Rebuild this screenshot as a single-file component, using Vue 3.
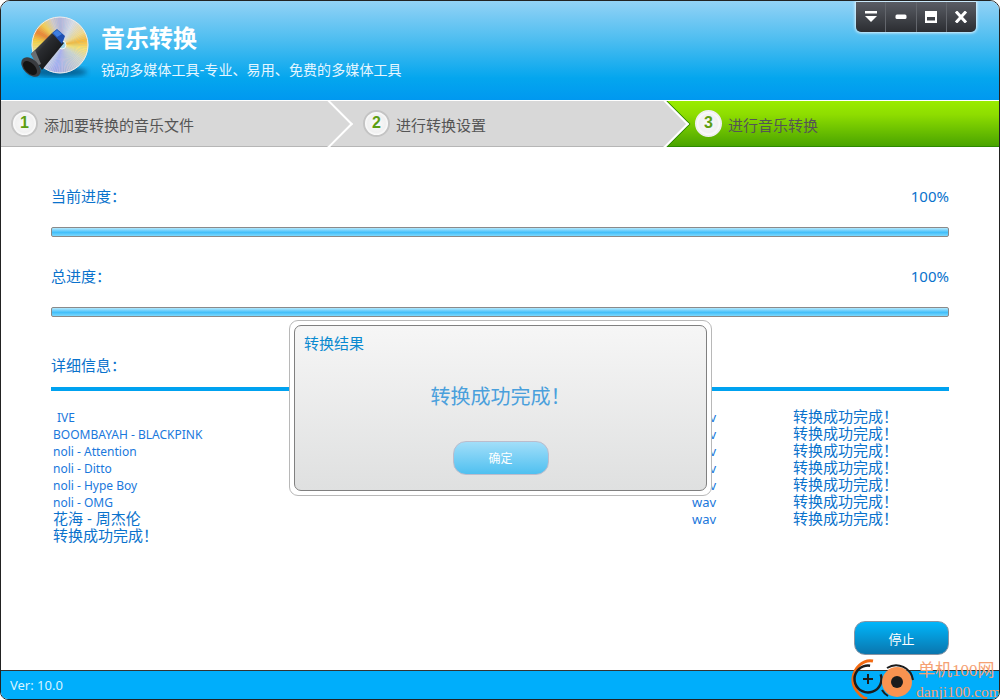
<template>
  <div class="window">
    <!-- 标题栏 -->
    <header class="head">
      <svg class="logo" width="70" height="68" viewBox="0 0 70 68">
        <defs>
          <filter id="soft"><feGaussianBlur stdDeviation="2.5" /></filter>
          <linearGradient id="tube" x1="0" y1="0" x2="1" y2="1">
            <stop offset="0" stop-color="#83878c" />
            <stop offset="0.38" stop-color="#2a2c30" />
            <stop offset="1" stop-color="#050505" />
          </linearGradient>
        </defs>
        <ellipse cx="36" cy="56" rx="30" ry="5" fill="#00365c" opacity="0.6" filter="url(#soft)" />
        <g>
          <polygon v-for="w in wedges" :key="w.points" :points="w.points" :fill="w.fill" :stroke="w.fill" stroke-width="0.4" />
        </g>
        <circle cx="39" cy="29" r="28" fill="none" stroke="#ececec" stroke-width="1" />
        <circle cx="41" cy="29" r="4" fill="#9fd4ea" stroke="#f4f4f4" stroke-width="1" />
        <polygon points="10,38 31,17 43,27 21,54" fill="url(#tube)" />
        <polygon points="31,17 36,13 44,20 41,28" fill="#1f4fb0" />
        <polygon points="32,17 36,14 41,18 36,21" fill="#3f7fe0" />
        <polygon points="10,38 14,34 20,48 16,50" fill="#6a6e72" />
        <ellipse cx="10" cy="51" rx="7.5" ry="11.5" transform="rotate(-45 10 51)" fill="#3a3c40" />
        <ellipse cx="9" cy="52" rx="5" ry="8.5" transform="rotate(-45 9 52)" fill="#141414" />
      </svg>
      <div class="brand">
        <h1>音乐转换</h1>
        <p>锐动多媒体工具-专业、易用、免费的多媒体工具</p>
      </div>
      <div class="win-btns">
        <button class="win-btn">
          <svg width="14" height="12" viewBox="0 0 14 12"><rect x="1" y="0" width="12" height="2.5" fill="#fff" /><polygon points="1,5 13,5 7,11" fill="#fff" /></svg>
        </button>
        <button class="win-btn">
          <svg width="14" height="12" viewBox="0 0 14 12"><rect x="1.5" y="3.5" width="11" height="4.5" rx="1.5" fill="#fff" /></svg>
        </button>
        <button class="win-btn">
          <svg width="14" height="12" viewBox="0 0 14 12"><path d="M1 0h12v12H1z M3 6v3.5h8V6z" fill="#fff" fill-rule="evenodd" /></svg>
        </button>
        <button class="win-btn">
          <svg width="14" height="12" viewBox="0 0 14 12"><path d="M2 0.5 12 11.5 M12 0.5 2 11.5" stroke="#fff" stroke-width="3" fill="none" /></svg>
        </button>
      </div>
    </header>

    <!-- 步骤条 -->
    <nav class="steps">
      <div v-for="s in steps" :key="s.no" class="step" :class="s.cls">
        <span class="step-no">{{ s.no }}</span>
        <span class="step-text">{{ s.text }}</span>
      </div>
    </nav>

    <!-- 内容 -->
    <main class="content">
      <div class="label-row first"><span>当前进度：</span><span class="pct">100%</span></div>
      <div class="bar"></div>
      <div class="label-row"><span>总进度：</span><span class="pct">100%</span></div>
      <div class="bar"></div>
      <div class="label-row detail"><span>详细信息：</span></div>
      <div class="rule"></div>
      <div class="list">
        <template v-for="(r, i) in rows" :key="i">
          <div class="name" :class="{ cjk: r.cjk, ive: r.name === 'IVE' }">{{ r.name }}</div>
          <div class="type">{{ r.type }}</div>
          <div class="status">{{ r.status }}</div>
        </template>
      </div>
      <button class="stop">停止</button>
    </main>

    <footer class="foot">Ver: 10.0</footer>

    <!-- 结果弹窗 -->
    <div class="dialog">
      <div class="dialog-in">
        <div class="dialog-title">转换结果</div>
        <div class="dialog-msg">转换成功完成！</div>
        <button class="ok">确定</button>
      </div>
    </div>

    <!-- 水印 -->
    <div class="mark">
      <svg width="64" height="44" viewBox="0 0 64 44">
        <path d="M22 4C12 2 3 11 2 21c-1 9 6 18 14 21" fill="none" stroke="#f26a12" stroke-width="3" />
        <circle cx="17" cy="22" r="13.5" fill="none" stroke="#1c1c1c" stroke-width="2.5" stroke-dasharray="70 15" transform="rotate(-20 17 22)" />
        <path d="M12 22h10M17 17v10" stroke="#1c1c1c" stroke-width="2" />
        <circle cx="46" cy="25" r="15" fill="#f99350" />
        <path d="M36 11a17 17 0 0 1 26 12" fill="none" stroke="#1c1c1c" stroke-width="2" />
        <path d="M31 33a17 17 0 0 0 6 6" fill="none" stroke="#1c1c1c" stroke-width="2" />
        <circle cx="46" cy="25" r="6" fill="#1c1c1c" />
      </svg>
      <div class="mark-text">
        <span class="mark-cn">单机100网</span>
        <span class="mark-en">danji100.com</span>
      </div>
    </div>
  </div>
</template>

<script setup>
const steps = [
  { no: 1, text: '添加要转换的音乐文件', cls: 'one' },
  { no: 2, text: '进行转换设置', cls: 'two' },
  { no: 3, text: '进行音乐转换', cls: 'three' }
]

const done = '转换成功完成！'
const rows = [
  { name: 'IVE', type: 'wav', status: done },
  { name: 'BOOMBAYAH - BLACKPINK', type: 'wav', status: done },
  { name: 'noli - Attention', type: 'wav', status: done },
  { name: 'noli - Ditto', type: 'wav', status: done },
  { name: 'noli - Hype Boy', type: 'wav', status: done },
  { name: 'noli - OMG', type: 'wav', status: done },
  { name: '花海 - 周杰伦', type: 'wav', status: done, cjk: true },
  { name: done, type: '', status: '', cjk: true }
]

// 光盘反光：角度从正上方顺时针
const stops = [
  [0, '#b4b4d8'], [30, '#dcdce4'], [62, '#f6d98a'], [80, '#f8b83a'], [98, '#fbe070'],
  [125, '#d8d8cc'], [160, '#c4c4d8'], [192, '#aeb0ee'], [222, '#dcdce0'], [252, '#ece4a8'],
  [280, '#f8d040'], [300, '#ee8030'], [320, '#f8d050'], [342, '#d4cac8'], [360, '#b4b4d8']
]
const hex = (c) => [1, 3, 5].map((i) => parseInt(c.slice(i, i + 2), 16))
const colorAt = (a) => {
  let i = 0
  while (stops[i + 1][0] < a) i++
  const t = (a - stops[i][0]) / (stops[i + 1][0] - stops[i][0])
  const c0 = hex(stops[i][1])
  const c1 = hex(stops[i + 1][1])
  return `rgb(${c0.map((v, k) => Math.round(v + (c1[k] - v) * t)).join(',')})`
}
const pt = (a) => {
  const r = (a * Math.PI) / 180
  return `${(39 + 28 * Math.sin(r)).toFixed(2)},${(29 - 28 * Math.cos(r)).toFixed(2)}`
}
const wedges = Array.from({ length: 90 }, (_, i) => {
  const a = i * 4
  return { points: `41,29 ${pt(a)} ${pt(a + 4)}`, fill: colorAt(a + 2) }
})
</script>

<style scoped>
.window {
  width: 1000px;
  height: 700px;
  box-sizing: border-box;
  border: 1px solid #222;
  border-radius: 10px 10px 8px 8px;
  overflow: hidden;
  background: #fff;
  display: flex;
  flex-direction: column;
  position: relative;
  font-family: "Noto Sans", "Noto Sans CJK SC", sans-serif;
}

.head {
  height: 99px;
  flex: none;
  display: flex;
  background: linear-gradient(#92d2f6 0%, #4cbdf0 40%, #04a6ee 78%, #0098f0 100%);
  border-bottom: 1px solid #fff;
  position: relative;
}

.logo {
  margin: 15px 0 0 20px;
  flex: none;
}

.brand {
  margin-left: 10px;
  color: #fff;
}

.brand h1 {
  margin: 20px 0 0;
  font-size: 24px;
  line-height: 34px;
  font-weight: 700;
}

.brand p {
  margin: 5px 0 0;
  font-size: 14px;
  line-height: 20px;
  letter-spacing: 0.1px;
  color: #e6f6ff;
}

.win-btns {
  position: absolute;
  top: 1px;
  left: 855px;
  width: 120px;
  height: 30px;
  display: flex;
  background: linear-gradient(#5a5d65, #2b2d31);
  border-radius: 0 0 5px 5px;
  box-shadow: 0 0 3px 1px rgba(255, 255, 255, 0.8);
}

.win-btn {
  flex: 1;
  padding: 0;
  border: 0;
  background: none;
  display: flex;
  align-items: center;
  justify-content: center;
  border-left: 1px solid #63666c;
}

.win-btn:first-child {
  border-left: 0;
}

.steps {
  height: 46px;
  flex: none;
  display: flex;
  overflow: hidden;
  color: #555;
  font-size: 15px;
}

.step {
  position: relative;
  display: flex;
  align-items: center;
  background: #d8d8d8;
  border-bottom: 1px solid #b6b6b6;
  box-sizing: border-box;
}

.step::after {
  content: "";
  position: absolute;
  top: 6px;
  right: -16px;
  width: 32px;
  height: 32px;
  background: #d8d8d8;
  border-top: 2px solid #fff;
  border-right: 2px solid #fff;
  transform: rotate(45deg);
  z-index: 2;
}

.step.one {
  width: 329px;
  padding-left: 10px;
  z-index: 2;
}

.step.two {
  width: 336px;
  padding-left: 33px;
  z-index: 1;
}

.step.three {
  flex: 1;
  padding-left: 29px;
  background: linear-gradient(#9aec00, #8edd00 30%, #4aa400);
  border-bottom-color: #2c8a00;
  border-left: 0;
}

.step.three::after {
  display: none;
}

.step.two::after {
  box-shadow: 1px -1px 0 #2c8a00;
}

.step-no {
  width: 27px;
  height: 27px;
  box-sizing: border-box;
  border-radius: 50%;
  flex: none;
  margin-right: 6px;
  border: 2px solid #c4c4c4;
  background: radial-gradient(circle, #fbfbfb 0%, #f0f0f0 55%, #fff 75%);
  color: #5c9e12;
  font: 700 16px/22px "Liberation Sans", sans-serif;
  text-align: center;
  position: relative;
  z-index: 3;
}

.step.three .step-no {
  border-color: #eee;
}

.step-text {
  margin-top: 2px;
  position: relative;
  z-index: 3;
}

.content {
  flex: 1;
  min-height: 0;
  display: flex;
  flex-direction: column;
  padding: 0 50px 15px;
  color: #0a72cc;
}

.label-row {
  display: flex;
  justify-content: space-between;
  height: 20px;
  line-height: 20px;
  font-size: 15px;
  margin-top: 29px;
}

.label-row.first {
  margin-top: 39px;
}

.label-row.detail {
  margin-top: 38px;
}

.pct {
  font-size: 15px;
}

.bar {
  height: 10px;
  margin-top: 21px;
  box-sizing: border-box;
  border: 1px solid #8a8a8a;
  border-radius: 2px;
  background: linear-gradient(#b4e8fd, #42bffa 55%, #7ed8fc);
}

.rule {
  height: 4px;
  margin-top: 12px;
  background: #00a2f0;
}

.list {
  margin-top: 18px;
  padding-left: 2px;
  display: grid;
  grid-template-columns: 639px 101px 1fr;
  grid-auto-rows: 17px;
  line-height: 17px;
  font-size: 12px;
  color: #1a78dc;
}

.name.cjk,
.status {
  font-size: 15px;
  line-height: 15px;
  color: #0a72cc;
}

.name.ive {
  padding-left: 4px;
}

.type {
  font-size: 13px;
}

.stop {
  margin: auto 0 0;
  align-self: flex-end;
  width: 95px;
  height: 34px;
  border: 1px solid #8794a4;
  border-radius: 11px;
  background: linear-gradient(#00b6fb, #0a76ae);
  color: #fff;
  font-size: 13px;
  font-family: inherit;
}

.foot {
  height: 28px;
  flex: none;
  padding-left: 9px;
  background: #00aefb;
  border-top: 1px solid #333;
  color: #d8f4ff;
  font-size: 13px;
  line-height: 28px;
}

.dialog {
  position: absolute;
  left: 288px;
  top: 319px;
  width: 423px;
  height: 176px;
  box-sizing: border-box;
  padding: 4px;
  background: #fff;
  border: 1px solid #b8b8b8;
  border-radius: 9px;
}

.dialog-in {
  height: 100%;
  box-sizing: border-box;
  border: 1px solid #808080;
  border-radius: 7px;
  background: linear-gradient(#f6f6f6, #dfe0e0);
  display: flex;
  flex-direction: column;
  align-items: center;
}

.dialog-title {
  align-self: flex-start;
  margin: 7px 0 0 9px;
  font-size: 15px;
  line-height: 20px;
  color: #0a8ad0;
}

.dialog-msg {
  margin-top: 30px;
  font-size: 20px;
  line-height: 28px;
  color: #4aa0dc;
}

.ok {
  margin-top: 30px;
  width: 96px;
  height: 34px;
  border: 1px solid #bcbccc;
  border-radius: 13px;
  background: linear-gradient(#a2def9, #4fc0f0);
  color: #fff;
  font-size: 12px;
  font-family: inherit;
}

.mark {
  position: absolute;
  left: 850px;
  top: 656px;
  display: flex;
  align-items: flex-start;
}

.mark-text {
  display: flex;
  flex-direction: column;
  margin-left: 3px;
  font-family: "Liberation Serif", "Noto Sans CJK SC", serif;
  color: #f5a173;
}

.mark-cn {
  font-size: 17px;
  line-height: 20px;
  margin-top: 4px;
  white-space: nowrap;
}

.mark-en {
  font-size: 15.5px;
  line-height: 20px;
  margin: 1px 0 0 -2px;
  white-space: nowrap;
}
</style>

<style>
html,
body {
  margin: 0;
  background: #fff;
}
</style>
